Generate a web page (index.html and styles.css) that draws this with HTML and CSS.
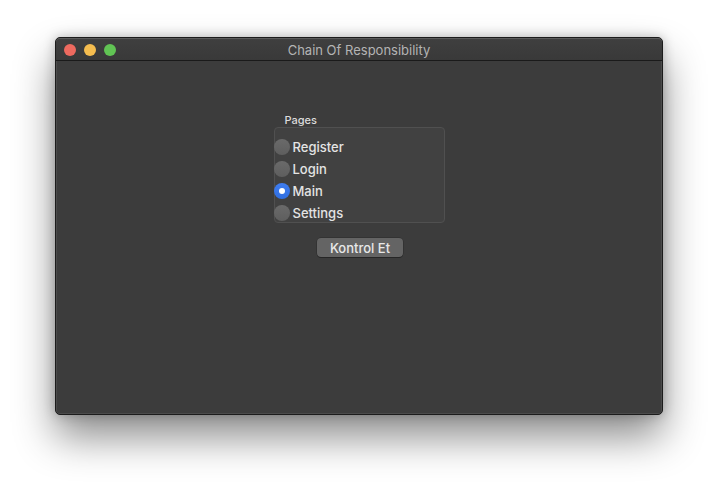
FILE: index.html
```html
<!DOCTYPE html>
<html>
<head>
<meta charset="utf-8">
<link rel="stylesheet" href="styles.css">
</head>
<body>
<div class="stage">
  <div class="window">
    <div class="titlebar">
      <div class="lights">
        <span class="light red"></span>
        <span class="light yellow"></span>
        <span class="light green"></span>
      </div>
      <div class="title">Chain Of Responsibility</div>
    </div>
    <div class="content">
      <div class="group">
        <div class="group-label">Pages</div>
        <div class="group-box">
          <div class="radio-row"><span class="radio"></span><span class="radio-text">Register</span></div>
          <div class="radio-row"><span class="radio"></span><span class="radio-text">Login</span></div>
          <div class="radio-row"><span class="radio checked"></span><span class="radio-text">Main</span></div>
          <div class="radio-row"><span class="radio"></span><span class="radio-text">Settings</span></div>
        </div>
      </div>
      <button class="btn">Kontrol Et</button>
    </div>
  </div>
</div>
</body>
</html>
```
FILE: styles.css
```css
html, body {
  margin: 0;
  padding: 0;
  background: #ffffff;
}
body {
  width: 718px;
  height: 489px;
  overflow: hidden;
  font-family: "Inter", "Noto Sans", "Liberation Sans", sans-serif;
}
.stage {
  padding: 37px 0 0 55px;
}
.window {
  width: 608px;
  height: 378px;
  box-sizing: border-box;
  background: #3c3c3c;
  border: 1px solid #1c1c1c;
  border-radius: 5px;
  box-shadow: 0 0 0 0.5px #5a5a5a inset, 0 22px 40px rgba(0,0,0,0.45), 0 0 12px rgba(0,0,0,0.25);
  display: flex;
  flex-direction: column;
  overflow: hidden;
}
.titlebar {
  height: 21px;
  flex: none;
  background: linear-gradient(#3f3f3f, #393939);
  border-top: 1px solid #5b5b5b;
  border-bottom: 1px solid #1a1a1a;
  display: flex;
  align-items: center;
  position: relative;
  border-radius: 4px 4px 0 0;
}
.lights {
  display: flex;
  gap: 8px;
  padding-left: 8px;
}
.light {
  width: 12px;
  height: 12px;
  border-radius: 50%;
  display: block;
}
.red { background: #ee6a5f; }
.yellow { background: #f5bd4f; }
.green { background: #61c454; }
.title {
  position: absolute;
  left: 0;
  right: 0;
  top: 3px;
  text-align: center;
  color: #b4b4b4;
  font-size: 13px;
  line-height: 16px;
  pointer-events: none;
}
.content {
  flex: 1;
  display: flex;
  flex-direction: column;
  align-items: center;
  padding-top: 53px;
}
.group {
  width: 171px;
  display: flex;
  flex-direction: column;
}
.group-label {
  color: #dcdcdc;
  font-size: 11px;
  line-height: 13px;
  padding-left: 11px;
  margin-bottom: 0;
  font-weight: 500;
}
.group-box {
  box-sizing: border-box;
  height: 96px;
  background: #414141;
  border: 1px solid #505050;
  border-radius: 4px;
  padding-top: 11px;
  display: flex;
  flex-direction: column;
  gap: 6px;
}
.radio-row {
  display: flex;
  align-items: center;
  height: 16px;
  margin-left: -1px;
}
.radio {
  width: 16px;
  height: 16px;
  border-radius: 50%;
  background: linear-gradient(#6a6a6a, #5e5e5e);
  box-sizing: border-box;
  flex: none;
  position: relative;
}
.radio.checked {
  background: linear-gradient(#3f7df0, #2f6ee0);
}
.radio.checked::after {
  content: "";
  position: absolute;
  left: 5px;
  top: 5px;
  width: 6px;
  height: 6px;
  border-radius: 50%;
  background: #ffffff;
}
.radio-text {
  margin-left: 3px;
  color: #e4e4e4;
  font-size: 13px;
  line-height: 16px;
  font-weight: 500;
}
.btn {
  margin-top: 15px;
  margin-left: 2px;
  width: 86px;
  height: 19px;
  border: none;
  border-radius: 4px;
  background: #646464;
  color: #e8e8e8;
  font-family: inherit;
  font-size: 13px;
  font-weight: 500;
  line-height: 16px;
  padding: 0;
  box-shadow: 0 1px 0 rgba(0,0,0,0.25), 0 0 0 0.5px rgba(0,0,0,0.3);
}
```
